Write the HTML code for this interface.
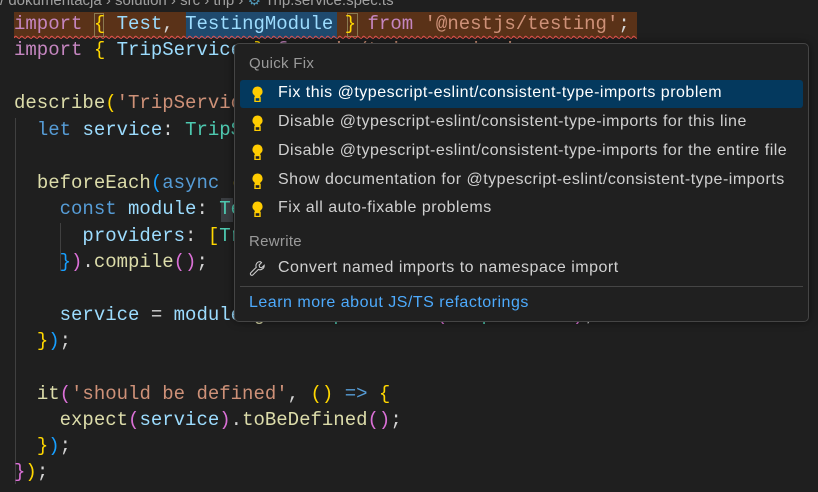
<!DOCTYPE html>
<html><head><meta charset="utf-8"><style>
html,body{margin:0;padding:0;width:818px;height:492px;overflow:hidden;background:#1f1f1f;}
.code{position:absolute;left:0;top:0;width:818px;height:492px;font-family:"Liberation Mono","DejaVu Sans Mono",monospace;font-size:19px;color:#d4d4d4;}
.ln{position:absolute;left:14px;height:26px;line-height:26px;white-space:pre;}
.kw{color:#c586c0}.b1{color:#ffd700}.b2{color:#da70d6}.b3{color:#179fff}.id{color:#9cdcfe}.st{color:#ce9178}.fn{color:#dcdcaa}.bl{color:#569cd6}.ty{color:#4ec9b0}
.guide{position:absolute;width:1px;background:#404040;}
.crumb{position:absolute;left:0;top:-9px;font-family:"Liberation Sans",sans-serif;font-size:15px;color:#a0a0a0;white-space:pre;}
.pop{position:absolute;left:234px;top:43px;width:573px;height:277px;background:#202020;border:1px solid #454545;border-radius:5px;font-family:"Liberation Sans",sans-serif;font-size:16px;letter-spacing:0.5px;color:#d0d0d0;box-shadow:0 0 8px rgba(0,0,0,.5);}
.hd{position:absolute;left:14px;color:#9a9a9a;font-size:15px;letter-spacing:0.3px;}
.it{position:absolute;left:43px;white-space:nowrap;}
.hl{position:absolute;left:5px;top:36px;width:563px;height:28px;background:#04395e;border-radius:3px;}
.bulb{position:absolute;left:17px;width:11px;height:16px;}
</style></head><body>
<div class="code">
<div class="crumb">/ dokumentacja › solution › src › trip › <span style="color:#519aba">⚙</span> Trip.service.spec.ts</div>
<div style="position:absolute;left:14px;top:12px;width:623px;height:26px;background:#5a3218;"></div>
<div style="position:absolute;left:186px;top:12px;width:151px;height:26px;background:#1f4a6e;"></div>
<div style="position:absolute;left:94px;top:13px;width:10px;height:24px;border:1px solid #8a7a50;box-sizing:border-box;"></div>
<div style="position:absolute;left:347px;top:13px;width:11px;height:24px;border:1px solid #8a7a50;box-sizing:border-box;"></div>
<svg style="position:absolute;left:14px;top:35px" width="623" height="4"><defs><pattern id="w" width="6" height="4" patternUnits="userSpaceOnUse"><path d="M0 3 Q1.5 0 3 2 T6 3" stroke="#e05050" stroke-width="1" fill="none"/></pattern></defs><rect width="623" height="4" fill="url(#w)"/></svg>
<div class="guide" style="left:15px;top:118px;height:366px"></div>
<div class="guide" style="left:60px;top:223px;height:48px"></div>
<div style="position:absolute;left:221px;top:198px;width:12px;height:24px;background:#3a3d41;"></div>
<div class="ln" style="top:11px"><span class="kw">import</span> <span class="b1">{</span> <span class="id">Test</span>, <span class="id">TestingModule</span> <span class="b1">}</span> <span class="kw">from</span> <span class="st">'@nestjs/testing'</span>;</div>
<div class="ln" style="top:37px"><span class="kw">import</span> <span class="b1">{</span> <span class="id">TripService</span> <span class="b1">}</span> <span class="kw">from</span> <span class="st">'./trip.service'</span>;</div>
<div class="ln" style="top:90px"><span class="fn">describe</span><span class="b1">(</span><span class="st">'TripService'</span>, <span class="b2">()</span> <span class="bl">=&gt;</span> <span class="b2">{</span></div>
<div class="ln" style="top:117px">  <span class="bl">let</span> <span class="id">service</span>: <span class="ty">TripService</span>;</div>
<div class="ln" style="top:170px">  <span class="fn">beforeEach</span><span class="b3">(</span><span class="bl">async</span> <span class="b1">()</span> <span class="bl">=&gt;</span> <span class="b1">{</span></div>
<div class="ln" style="top:196px">    <span class="bl">const</span> <span class="id">module</span>: <span class="ty">TestingModule</span> = <span class="kw">await</span></div>
<div class="ln" style="top:223px">      <span class="id">providers</span>: <span class="b1">[</span><span class="ty">TripService</span><span class="b1">]</span>,</div>
<div class="ln" style="top:249px">    <span class="b3">}</span><span class="b2">)</span>.<span class="fn">compile</span><span class="b2">()</span>;</div>
<div class="ln" style="top:302px">    <span class="id">service</span> = <span class="id">module</span>.<span class="fn">get</span>&lt;<span class="ty">TripService</span>&gt;<span class="b2">(</span><span class="ty">TripService</span><span class="b2">)</span>;</div>
<div class="ln" style="top:328px">  <span class="b1">}</span><span class="b3">)</span>;</div>
<div class="ln" style="top:381px">  <span class="fn">it</span><span class="b2">(</span><span class="st">'should be defined'</span>, <span class="b1">()</span> <span class="bl">=&gt;</span> <span class="b1">{</span></div>
<div class="ln" style="top:407px">    <span class="fn">expect</span><span class="b2">(</span><span class="id">service</span><span class="b2">)</span>.<span class="fn">toBeDefined</span><span class="b2">()</span>;</div>
<div class="ln" style="top:433px">  <span class="b1">}</span><span class="b3">)</span>;</div>
<div class="ln" style="top:459px"><span class="b2">}</span><span class="b1">)</span>;</div>
</div>
<div class="pop">
<div class="hd" style="top:11px">Quick Fix</div>
<div class="hl"></div>
<svg class="bulb" style="top:42px" viewBox="0 0 11 16"><path d="M5.5 0.5a5 5 0 0 0-3 9l0.5 1.5h5l0.5-1.5a5 5 0 0 0-3-9z" fill="#ffcc00"/><rect x="3" y="11.5" width="5" height="4" fill="none" stroke="#ffcc00" stroke-width="1.4"/></svg>
<div class="it" style="top:40px;color:#fff">Fix this @typescript-eslint/consistent-type-imports problem</div>
<svg class="bulb" style="top:71px" viewBox="0 0 11 16"><path d="M5.5 0.5a5 5 0 0 0-3 9l0.5 1.5h5l0.5-1.5a5 5 0 0 0-3-9z" fill="#ffcc00"/><rect x="3" y="11.5" width="5" height="4" fill="none" stroke="#ffcc00" stroke-width="1.4"/></svg>
<div class="it" style="top:69px">Disable @typescript-eslint/consistent-type-imports for this line</div>
<svg class="bulb" style="top:100px" viewBox="0 0 11 16"><path d="M5.5 0.5a5 5 0 0 0-3 9l0.5 1.5h5l0.5-1.5a5 5 0 0 0-3-9z" fill="#ffcc00"/><rect x="3" y="11.5" width="5" height="4" fill="none" stroke="#ffcc00" stroke-width="1.4"/></svg>
<div class="it" style="top:98px">Disable @typescript-eslint/consistent-type-imports for the entire file</div>
<svg class="bulb" style="top:129px" viewBox="0 0 11 16"><path d="M5.5 0.5a5 5 0 0 0-3 9l0.5 1.5h5l0.5-1.5a5 5 0 0 0-3-9z" fill="#ffcc00"/><rect x="3" y="11.5" width="5" height="4" fill="none" stroke="#ffcc00" stroke-width="1.4"/></svg>
<div class="it" style="top:127px">Show documentation for @typescript-eslint/consistent-type-imports</div>
<svg class="bulb" style="top:157px" viewBox="0 0 11 16"><path d="M5.5 0.5a5 5 0 0 0-3 9l0.5 1.5h5l0.5-1.5a5 5 0 0 0-3-9z" fill="#ffcc00"/><rect x="3" y="11.5" width="5" height="4" fill="none" stroke="#ffcc00" stroke-width="1.4"/></svg>
<div class="it" style="top:155px">Fix all auto-fixable problems</div>
<div class="hd" style="top:189px">Rewrite</div>
<svg style="position:absolute;left:14px;top:216px" width="17" height="17" viewBox="0 0 16 16"><path d="M10.5 1.5a4 4 0 0 0-3.7 5.4L1.7 12a1.4 1.4 0 0 0 2 2l5.1-5.1A4 4 0 0 0 14.3 5l-2.3 2.3-2-0.5-0.5-2L11.8 2.5a4 4 0 0 0-1.3-1z" fill="none" stroke="#cccccc" stroke-width="1"/></svg>
<div class="it" style="top:215px">Convert named imports to namespace import</div>
<div style="position:absolute;left:5px;top:242px;width:563px;height:1px;background:#454545"></div>
<div class="it" style="left:14px;top:250px;color:#4daafc">Learn more about JS/TS refactorings</div>
</div>
</body></html>
